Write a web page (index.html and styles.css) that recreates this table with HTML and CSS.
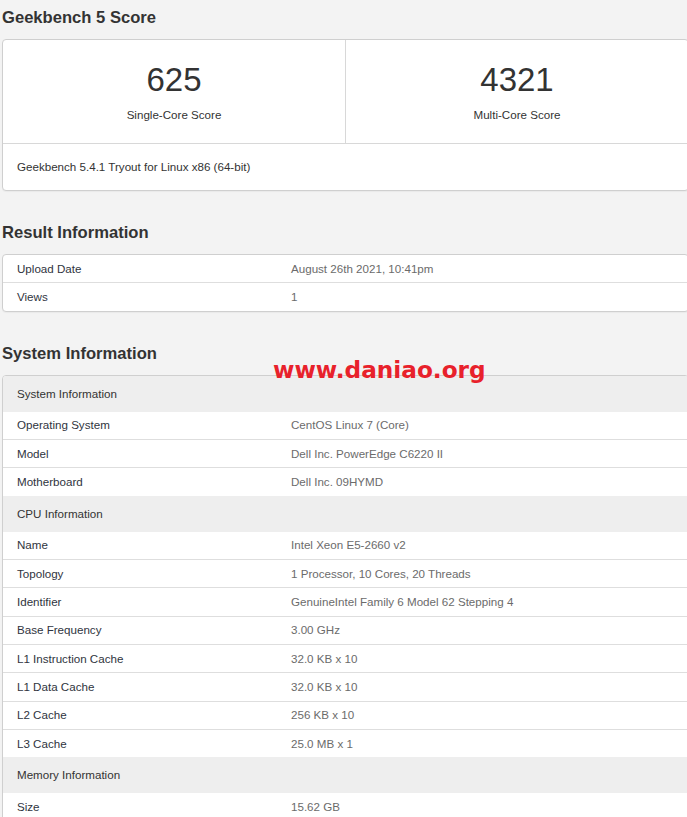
FILE: index.html
```html
<!DOCTYPE html>
<html>
<head>
<meta charset="utf-8">
<link rel="stylesheet" href="styles.css">
</head>
<body>
<div class="page">
  <h2 class="heading">Geekbench 5 Score</h2>
  <div class="card">
    <div class="scores">
      <div class="score">
        <div class="score-num">625</div>
        <div class="score-label">Single-Core Score</div>
      </div>
      <div class="score">
        <div class="score-num">4321</div>
        <div class="score-label">Multi-Core Score</div>
      </div>
    </div>
    <div class="card-foot">Geekbench 5.4.1 Tryout for Linux x86 (64-bit)</div>
  </div>

  <h2 class="heading heading-next">Result Information</h2>
  <div class="card">
    <div class="row"><span class="k">Upload Date</span><span class="v">August 26th 2021, 10:41pm</span></div>
    <div class="row"><span class="k">Views</span><span class="v">1</span></div>
  </div>

  <h2 class="heading heading-next">System Information</h2>
  <div class="card">
    <div class="group">System Information</div>
    <div class="row"><span class="k">Operating System</span><span class="v">CentOS Linux 7 (Core)</span></div>
    <div class="row"><span class="k">Model</span><span class="v">Dell Inc. PowerEdge C6220 II</span></div>
    <div class="row"><span class="k">Motherboard</span><span class="v">Dell Inc. 09HYMD</span></div>
    <div class="group">CPU Information</div>
    <div class="row"><span class="k">Name</span><span class="v">Intel Xeon E5-2660 v2</span></div>
    <div class="row"><span class="k">Topology</span><span class="v">1 Processor, 10 Cores, 20 Threads</span></div>
    <div class="row"><span class="k">Identifier</span><span class="v">GenuineIntel Family 6 Model 62 Stepping 4</span></div>
    <div class="row"><span class="k">Base Frequency</span><span class="v">3.00 GHz</span></div>
    <div class="row"><span class="k">L1 Instruction Cache</span><span class="v">32.0 KB x 10</span></div>
    <div class="row"><span class="k">L1 Data Cache</span><span class="v">32.0 KB x 10</span></div>
    <div class="row"><span class="k">L2 Cache</span><span class="v">256 KB x 10</span></div>
    <div class="row"><span class="k">L3 Cache</span><span class="v">25.0 MB x 1</span></div>
    <div class="group">Memory Information</div>
    <div class="row"><span class="k">Size</span><span class="v">15.62 GB</span></div>
  </div>
</div>
<div class="watermark">www.daniao.org</div>
</body>
</html>
```

FILE: styles.css
```css
html, body {
  margin: 0;
  padding: 0;
  overflow: hidden;
  background: #f3f3f3;
}
body {
  font-family: "Liberation Sans", Arial, sans-serif;
  color: #333;
  position: relative;
  height: 817px;
}
.page {
  padding-top: 8px;
  margin-left: 2px;
  width: 687px;
}
.heading {
  margin: 0 0 11px 0;
  font-size: 16.6px;
  line-height: 20px;
  font-weight: bold;
  color: #333;
}
.heading-next {
  margin-top: 32px;
}
.card {
  box-sizing: border-box;
  width: 687px;
  background: #fff;
  border: 1px solid #cfcfcf;
  border-radius: 4px;
  overflow: hidden;
  box-shadow: 0 1px 1px rgba(0,0,0,0.04);
}
.scores {
  display: flex;
  border-bottom: 1px solid #d8d8d8;
}
.score {
  flex: 1;
  text-align: center;
  padding: 20px 0 20px;
  height: 63px;
}
.score + .score {
  border-left: 1px solid #d8d8d8;
}
.score-num {
  font-size: 33px;
  line-height: 40px;
  color: #333;
}
.score-label {
  margin-top: 7px;
  font-size: 11.6px;
  line-height: 16px;
  color: #333;
}
.card-foot {
  height: 46px;
  display: flex;
  align-items: center;
  padding-left: 14px;
  padding-bottom: 1px;
  box-sizing: border-box;
  font-size: 11.6px;
  color: #333;
}
.row {
  display: flex;
  align-items: center;
  height: 27.33px;
  padding-bottom: 1px;
  box-sizing: border-box;
  font-size: 11.6px;
}
.row + .row {
  border-top: 1px solid #dedede;
  height: 28.33px;
}
.group {
  height: 36px;
  display: flex;
  align-items: center;
  padding-left: 14px;
  padding-bottom: 1px;
  box-sizing: border-box;
  background: #eeeeee;
  font-size: 11.6px;
  color: #333;
}
.k {
  box-sizing: border-box;
  width: 40%;
  padding-left: 14px;
  color: #2f3440;
}
.v {
  box-sizing: border-box;
  width: 60%;
  padding-left: 14px;
  color: #6b6b6b;
}
.watermark {
  position: absolute;
  left: 273px;
  top: 357px;
  font-family: "DejaVu Sans", Verdana, sans-serif;
  font-weight: bold;
  font-size: 23.2px;
  line-height: 26px;
  color: #e8212b;
}
```
